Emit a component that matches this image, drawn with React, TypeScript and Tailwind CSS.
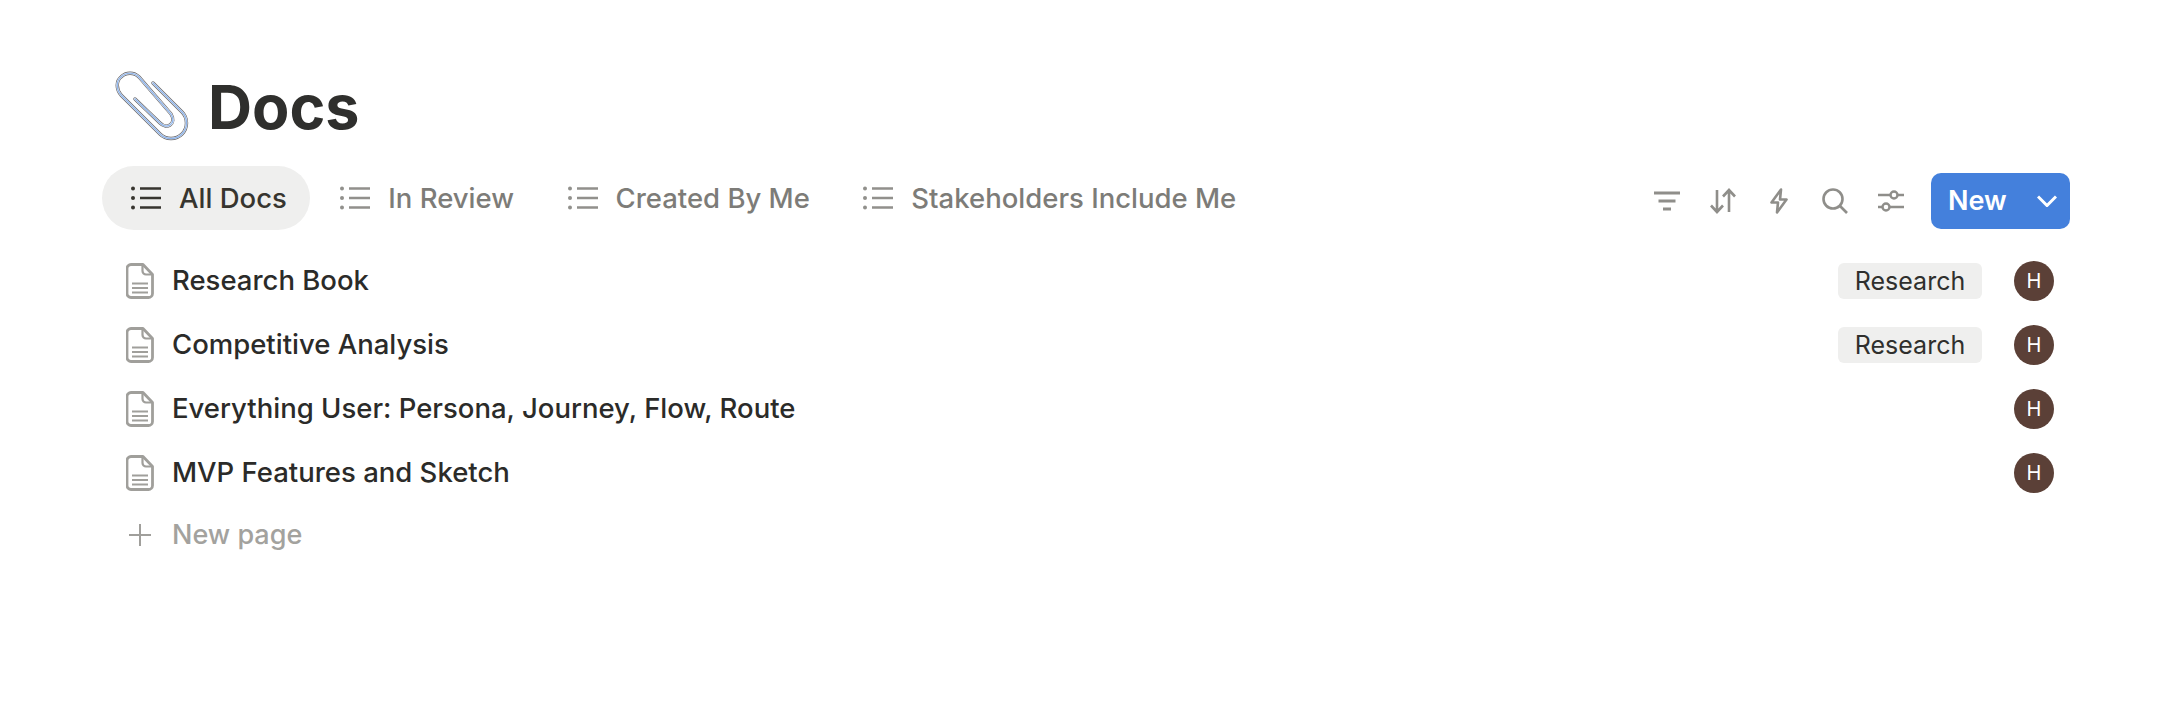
const tabs = ['All Docs', 'In Review', 'Created By Me', 'Stakeholders Include Me'];

const docs = [
  { name: 'Research Book', tag: 'Research' },
  { name: 'Competitive Analysis', tag: 'Research' },
  { name: 'Everything User: Persona, Journey, Flow, Route' },
  { name: 'MVP Features and Sketch' },
];

function Paperclip() {
  const d =
    'M48 21 L77 50 C83 56 83 66 77 72 C71 78 61 78 55 72 L16 33 C11 27 11 19 16 15 C21 10 29 10 34 15 L66 52 C69 57 68 61 65 63 C62 65 58 64 55 61 L30 37';
  return (
    <svg width="90" height="90" viewBox="0 0 90 90" fill="none" strokeLinecap="round" className="shrink-0">
      <path d={d} stroke="#5f5f64" strokeWidth="3.4" />
      <path d={d} stroke="#eceef1" strokeWidth="2.2" />
      <path d={d} stroke="#8db4ec" strokeWidth="1.2" />
    </svg>
  );
}

function ListIcon({ active }: { active: boolean }) {
  const color = active ? '#37352f' : '#91908c';
  return (
    <svg width="30" height="24" viewBox="0 0 30 24" fill="none" stroke={color} strokeWidth="2.4" className="shrink-0">
      <path d="M9 2.500h21M9 12h21M9 21.500h21" />
      <circle cx="2" cy="2.500" r="2" fill={color} stroke="none" />
      <circle cx="2" cy="12" r="2" fill={color} stroke="none" />
      <circle cx="2" cy="21.500" r="2" fill={color} stroke="none" />
    </svg>
  );
}

function DocIcon() {
  return (
    <svg width="28" height="36" viewBox="0 0 28 36" fill="none" stroke="#a09f9b" strokeWidth="2.8" className="shrink-0">
      <path d="M5 1.500h12l9.500 10V30.500a4 4 0 0 1-4 4H5a4 4 0 0 1-4-4V5.500a4 4 0 0 1 4-4z" strokeLinejoin="round" />
      <path d="M16.500 1.500V8a3.500 3.500 0 0 0 3.500 3.500h6.500" strokeWidth="2.200" />
      <path d="M6 20.500h16M6 25h16M6 29.500h16" strokeWidth="2" />
    </svg>
  );
}

function Toolbar() {
  return (
    <div className="flex items-center pt-[6px] text-[#8f8e8a]">
      <svg width="26" height="20" viewBox="0 0 26 20" fill="none" stroke="currentColor" strokeWidth="2.800" className="mr-[30px]">
        <path d="M0 2h26M4.500 10h17M9 18h8" />
      </svg>
      <svg width="26" height="26" viewBox="0 0 26 26" fill="none" stroke="currentColor" strokeWidth="2.600" className="mr-[34px]">
        <path d="M7 2v22M1 17.500l6 6.500 6-6.500M19 24V2M13 8.500l6-6.500 6 6.500" />
      </svg>
      <svg width="18" height="26" viewBox="0 0 18 26" fill="none" stroke="currentColor" strokeWidth="2.600" strokeLinejoin="round" className="mr-[34px]">
        <path d="M11 1.500 1.500 14.500H8L7 24.500 16.500 11.500H10z" />
      </svg>
      <svg width="26" height="26" viewBox="0 0 26 26" fill="none" stroke="currentColor" strokeWidth="2.600" className="mr-[30px]">
        <circle cx="11" cy="11" r="9.500" />
        <path d="M18 18l7 7" />
      </svg>
      <svg width="26" height="22" viewBox="0 0 26 22" fill="none" stroke="currentColor" strokeWidth="2.400" className="mr-[27px]">
        <path d="M0 5h12M20 5h6M0 17h4M12 17h14" />
        <circle cx="16" cy="5" r="3.500" />
        <circle cx="8" cy="17" r="3.500" />
      </svg>
      <div className="flex h-14 w-[139px] items-center justify-between rounded-[10px] bg-[#4480dc] pl-[17px] pr-[13px] text-[27px] font-semibold text-white">
        <span>New</span>
        <svg width="20" height="12" viewBox="0 0 20 12" fill="none" stroke="currentColor" strokeWidth="3">
          <path d="M1 1.500l9 9 9-9" />
        </svg>
      </div>
    </div>
  );
}

export default function App() {
  return (
    <div className="min-h-[704px] bg-white px-[102px] pt-[62px] font-['Inter',sans-serif] text-[#2b2b29]">
      <div className="flex h-[90px] items-center">
        <div className="ml-[3px] mr-[13px]">
          <Paperclip />
        </div>
        <h1 className="text-[61px] font-bold leading-none text-[#2f2f2d]">Docs</h1>
      </div>

      <div className="mt-[14px] flex items-center justify-between">
        <div className="flex items-center gap-[1.500px]">
          {tabs.map((tab, i) => (
            <div
              key={tab}
              className={
                i === 0
                  ? 'flex h-16 items-center gap-[18px] rounded-[32px] bg-[#efefee] pl-[29px] pr-[23px] text-[27.5px] font-medium text-[#37352f]'
                  : 'flex h-16 items-center gap-[18px] pl-[29px] pr-[23px] text-[27.5px] font-medium text-[#7d7c78]'
              }
            >
              <ListIcon active={i === 0} />
              <span className="pt-[2px]">{tab}</span>
            </div>
          ))}
        </div>
        <Toolbar />
      </div>

      <div className="mt-[19px]">
        {docs.map((doc) => (
          <div key={doc.name} className="flex h-16 items-center pl-[24px] pr-[16px]">
            <DocIcon />
            <span className="ml-[18px] flex-1 text-[27.5px] font-medium text-[#2b2b29]">{doc.name}</span>
            {doc.tag && (
              <span className="mr-[32px] flex h-9 w-[144px] items-center justify-center rounded-[6px] bg-[#efefee] pt-[2px] text-[25px] text-[#2f2f2d]">
                {doc.tag}
              </span>
            )}
            <span className="flex h-10 w-10 items-center justify-center rounded-full bg-[#5b4037] text-[20px] text-white">H</span>
          </div>
        ))}
        <div className="flex h-[60px] items-center pl-[24px]">
          <svg width="28" height="24" viewBox="0 0 28 24" fill="none" stroke="#a09f9b" strokeWidth="2" className="shrink-0">
            <path d="M14 1v22M3 12h22" />
          </svg>
          <span className="ml-[18px] text-[27px] font-medium text-[#a3a29e]">New page</span>
        </div>
      </div>
    </div>
  );
}
